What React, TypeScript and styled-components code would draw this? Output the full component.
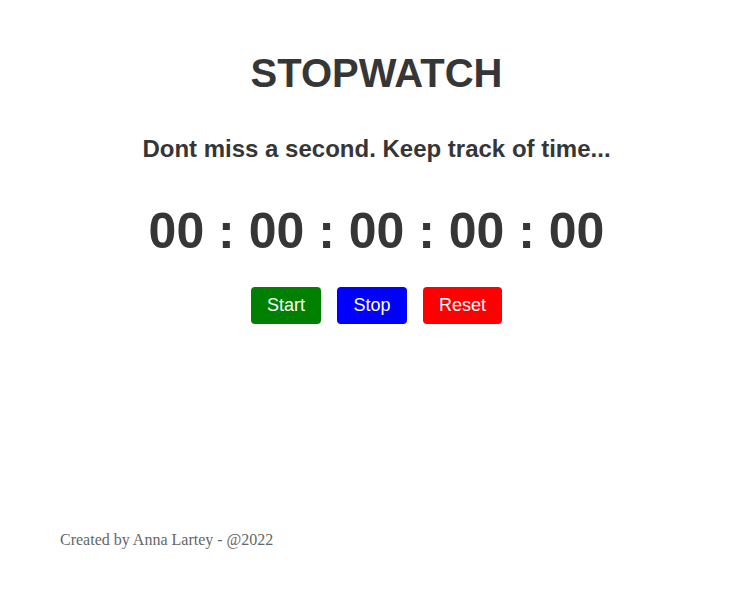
import React from "react";
import styled, { createGlobalStyle } from "styled-components";

const Global = createGlobalStyle`
  html, body { margin: 0; padding: 0; background: #fff; }
  body { font-family: "Liberation Serif", serif; }
`;

const Page = styled.div`
  width: 753px;
  height: 589px;
  display: flex;
  flex-direction: column;
  align-items: center;
  color: #363636;
  font-family: "Liberation Sans", Arial, sans-serif;
`;

const Title = styled.h1`
  margin: 50px 0 0;
  font-size: 40px;
  line-height: 46px;
  font-weight: bold;
`;

const Tagline = styled.h2`
  margin: 39px 0 0;
  font-size: 24px;
  line-height: 28px;
  font-weight: bold;
`;

const Timer = styled.div`
  margin: 39px 0 0;
  font-size: 50px;
  line-height: 58px;
  font-weight: bold;
`;

const Controls = styled.div`
  display: flex;
  gap: 16px;
  margin-top: 27px;
`;

const Button = styled.button<{ $bg: string; $w: number }>`
  width: ${(p) => p.$w}px;
  height: 37px;
  border: none;
  border-radius: 4px;
  background: ${(p) => p.$bg};
  color: #fff;
  font-family: "Liberation Sans", Arial, sans-serif;
  font-size: 18px;
  padding: 0;
  cursor: pointer;
`;

const Footer = styled.footer`
  align-self: flex-start;
  margin-top: auto;
  margin-bottom: 40px;
  padding-left: 60px;
  font-family: "Liberation Serif", serif;
  font-size: 16px;
  color: #666;
`;

export default function App() {
  return (
    <>
      <Global />
      <Page>
        <Title>STOPWATCH</Title>
        <Tagline>Dont miss a second. Keep track of time...</Tagline>
        <Timer>00 : 00 : 00 : 00 : 00</Timer>
        <Controls>
          <Button $bg="#008000" $w={70}>Start</Button>
          <Button $bg="#0000ff" $w={70}>Stop</Button>
          <Button $bg="#ff0000" $w={79}>Reset</Button>
        </Controls>
        <Footer>Created by Anna Lartey - @2022</Footer>
      </Page>
    </>
  );
}
